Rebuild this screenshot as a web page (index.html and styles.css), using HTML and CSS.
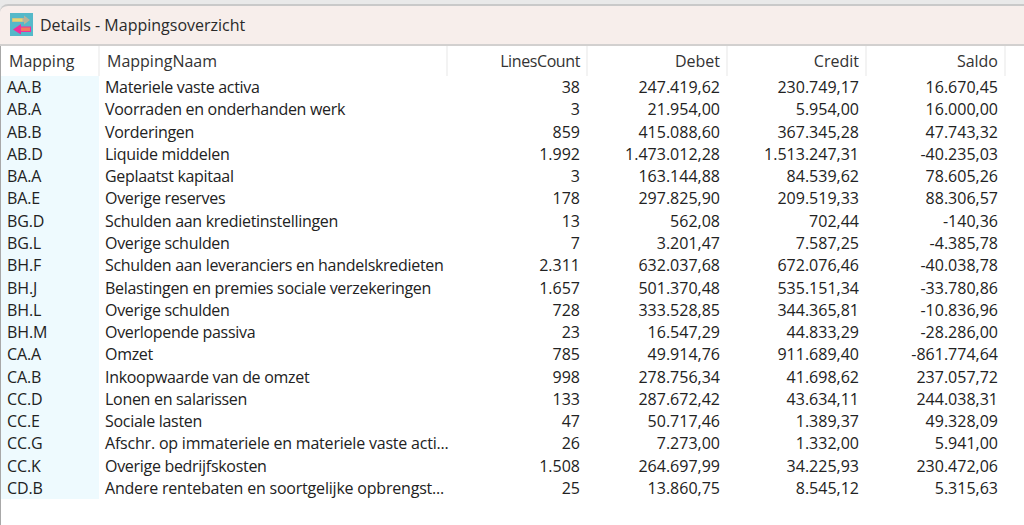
FILE: index.html
```html
<!DOCTYPE html>
<html lang="nl">
<head>
<meta charset="utf-8">
<title>Details - Mappingsoverzicht</title>
<link rel="stylesheet" href="styles.css">
</head>
<body>
<div class="window">
<header class="titlebar">
<svg class="app-icon" width="23" height="23" viewBox="0 0 23 23" aria-hidden="true">
<rect width="23" height="23" fill="#55b9c9"/>
<path d="M2 5h12V2.500l6 4.500-6 4.500V9H2z" fill="#b9b29a"/>
<rect x="2.500" y="5.500" width="10" height="3" fill="#e3d873"/>
<path d="M21 13.500H11V11l-8 5.500 8 5V19h10z" fill="#ee2f9c"/>
<rect x="11" y="14.500" width="9" height="3.500" fill="#f2795d"/>
</svg>
<span class="title">Details - Mappingsoverzicht</span>
</header>
<main class="content">
<table class="grid">
<colgroup><col class="c1"><col class="c2"><col class="c3"><col class="c4"><col class="c5"><col class="c6"></colgroup>
<thead><tr><th class="hl">Mapping</th><th class="hl name">MappingNaam</th><th class="tight">LinesCount</th><th>Debet</th><th>Credit</th><th>Saldo</th></tr></thead>
<tbody>
<tr><td>AA.B</td><td>Materiele vaste activa</td><td>38</td><td>247.419,62</td><td>230.749,17</td><td>16.670,45</td></tr>
<tr><td>AB.A</td><td>Voorraden en onderhanden werk</td><td>3</td><td>21.954,00</td><td>5.954,00</td><td>16.000,00</td></tr>
<tr><td>AB.B</td><td>Vorderingen</td><td>859</td><td>415.088,60</td><td>367.345,28</td><td>47.743,32</td></tr>
<tr><td>AB.D</td><td>Liquide middelen</td><td>1.992</td><td>1.473.012,28</td><td>1.513.247,31</td><td>-40.235,03</td></tr>
<tr><td>BA.A</td><td>Geplaatst kapitaal</td><td>3</td><td>163.144,88</td><td>84.539,62</td><td>78.605,26</td></tr>
<tr><td>BA.E</td><td>Overige reserves</td><td>178</td><td>297.825,90</td><td>209.519,33</td><td>88.306,57</td></tr>
<tr><td>BG.D</td><td>Schulden aan kredietinstellingen</td><td>13</td><td>562,08</td><td>702,44</td><td>-140,36</td></tr>
<tr><td>BG.L</td><td>Overige schulden</td><td>7</td><td>3.201,47</td><td>7.587,25</td><td>-4.385,78</td></tr>
<tr><td>BH.F</td><td>Schulden aan leveranciers en handelskredieten</td><td>2.311</td><td>632.037,68</td><td>672.076,46</td><td>-40.038,78</td></tr>
<tr><td>BH.J</td><td>Belastingen en premies sociale verzekeringen</td><td>1.657</td><td>501.370,48</td><td>535.151,34</td><td>-33.780,86</td></tr>
<tr><td>BH.L</td><td>Overige schulden</td><td>728</td><td>333.528,85</td><td>344.365,81</td><td>-10.836,96</td></tr>
<tr><td>BH.M</td><td>Overlopende passiva</td><td>23</td><td>16.547,29</td><td>44.833,29</td><td>-28.286,00</td></tr>
<tr><td>CA.A</td><td>Omzet</td><td>785</td><td>49.914,76</td><td>911.689,40</td><td>-861.774,64</td></tr>
<tr><td>CA.B</td><td>Inkoopwaarde van de omzet</td><td>998</td><td>278.756,34</td><td>41.698,62</td><td>237.057,72</td></tr>
<tr><td>CC.D</td><td>Lonen en salarissen</td><td>133</td><td>287.672,42</td><td>43.634,11</td><td>244.038,31</td></tr>
<tr><td>CC.E</td><td>Sociale lasten</td><td>47</td><td>50.717,46</td><td>1.389,37</td><td>49.328,09</td></tr>
<tr><td>CC.G</td><td class="cut">Afschr. op immateriele en materiele vaste acti...</td><td>26</td><td>7.273,00</td><td>1.332,00</td><td>5.941,00</td></tr>
<tr><td>CC.K</td><td>Overige bedrijfskosten</td><td>1.508</td><td>264.697,99</td><td>34.225,93</td><td>230.472,06</td></tr>
<tr><td>CD.B</td><td class="cut">Andere rentebaten en soortgelijke opbrengst...</td><td>25</td><td>13.860,75</td><td>8.545,12</td><td>5.315,63</td></tr>
</tbody>
</table>
</main>
</div>
</body>
</html>
```
FILE: styles.css
```css
* { box-sizing: border-box; }
html, body { margin: 0; height: 100%; }
body { background: #fff; overflow: hidden; font-family: "Open Sans", "Noto Sans", sans-serif; color: #222; }
.window { height: 525px; padding-top: 4px; background: #e9e9e9; display: flex; flex-direction: column; }
.titlebar { height: 42px; flex: none; display: flex; align-items: center; gap: 7px; padding: 0 0 1px 10px; background: #f7eeeb; border-top: 2px solid #c9c9c9; border-top-left-radius: 8px; border-bottom: 2px solid #d2d0cf; }
.app-icon { flex: none; }
.title { font-size: 16px; color: #2a2a2a; }
.content { flex: 1; background: #fff; border-left: 1px solid #a8a8a8; }
.grid { table-layout: fixed; width: 1004px; border-collapse: collapse; font-size: 16px; }
.c1 { width: 98px; } .c2 { width: 348px; } .c3 { width: 140px; } .c4 { width: 140px; } .c5 { width: 139px; } .c6 { width: 139px; }
th { height: 30px; padding: 0 6px 0 0; font-weight: 400; text-align: right; color: #333; border-right: 2px solid #f3f3f3; white-space: nowrap; }
th.hl { text-align: left; padding-left: 8px; }
th.name { padding-left: 7px; }
th.tight { letter-spacing: -0.4px; }
td { height: 22.28px; padding: 0 7px 0 0; text-align: right; white-space: nowrap; }
td:nth-child(1) { text-align: left; padding-left: 6px; background: #eefafe; letter-spacing: -0.1px; }
td:nth-child(2) { text-align: left; padding-left: 6px; padding-right: 0; letter-spacing: -0.3px; }
td.cut:nth-child(2) { letter-spacing: -0.2px; }
```
